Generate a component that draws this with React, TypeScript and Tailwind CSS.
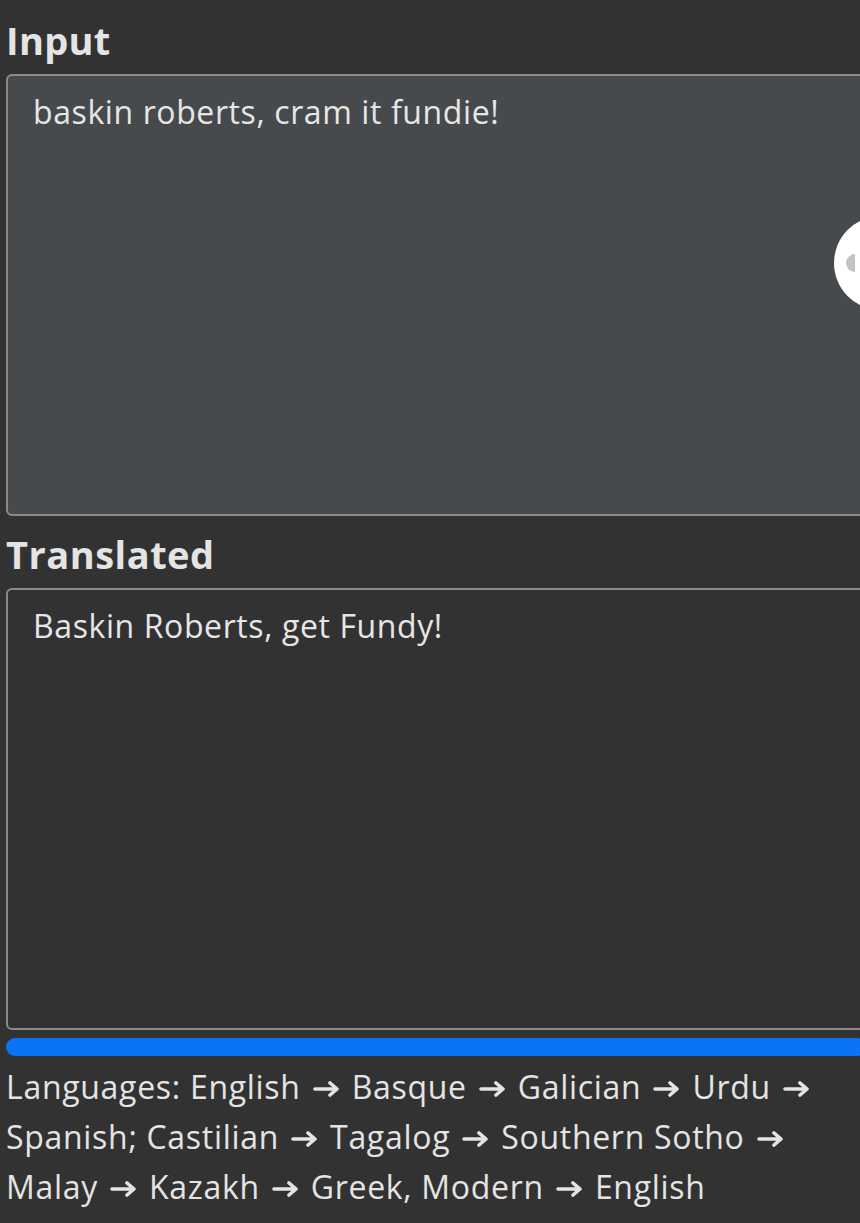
export default function App() {
  const chain = [
    "English",
    "Basque",
    "Galician",
    "Urdu",
    "Spanish; Castilian",
    "Tagalog",
    "Southern Sotho",
    "Malay",
    "Kazakh",
    "Greek, Modern",
    "English",
  ];

  return (
    <div className="relative w-[860px] h-[1223px] overflow-hidden bg-[#323232] text-[#e6e6e6] [font-family:'Open_Sans',sans-serif]">
      <div className="pl-[6px] pr-0 pt-[14px] w-[866px]">
        <h2 className="text-[38px] font-bold leading-[52px] tracking-[0.3px] text-[#e4e4e4]">Input</h2>
        <div className="mt-[8px] h-[442px] rounded-[6px] border-2 border-[#8a8a8a] bg-[#464a4d] px-[25px] pt-[14px] text-[32px] leading-[44px] tracking-[0.6px]">
          baskin roberts, cram it fundie!
        </div>

        <h2 className="mt-[12px] text-[38px] font-bold leading-[52px] tracking-[0.5px] text-[#e4e4e4]">Translated</h2>
        <div className="mt-[8px] h-[442px] rounded-[6px] border-2 border-[#8a8a8a] bg-[#323232] px-[25px] pt-[14px] text-[32px] leading-[44px] tracking-[0.6px]">
          Baskin Roberts, get Fundy!
        </div>

        <div className="mt-[8px] h-[18px] w-[860px] rounded-full bg-[#0b74f6]" />

        <p className="mt-[6px] pr-[40px] text-[32px] leading-[50px] tracking-[0.7px] text-[#e4e4e4]">
          Languages:{" "}
          {chain.map((l, i) => (
            <span key={i}>
              {i < chain.length - 1 ? (
                <>
                  <span className="whitespace-nowrap">
                    {l}
                    <svg
                      aria-label="→"
                      viewBox="0 0 27 16"
                      className="ml-[12px] mr-[3px] inline-block h-[16px] w-[27px] align-[2px]"
                      fill="none"
                      stroke="currentColor"
                      strokeWidth={3.6}
                      strokeLinecap="round"
                      strokeLinejoin="round"
                    >
                      <path d="M2 8 H24 M17 2 L24 8 L17 14" />
                    </svg>
                  </span>{" "}
                </>
              ) : (
                l
              )}
            </span>
          ))}
        </p>
      </div>

      {/* floating edge handle */}
      <div className="absolute left-[834px] top-[216px] flex h-[94px] w-[94px] items-center rounded-full bg-white pl-[12px]">
        <div className="h-[18px] w-[9px] rounded-l-full bg-[#c4c4c4]" />
      </div>
    </div>
  );
}
